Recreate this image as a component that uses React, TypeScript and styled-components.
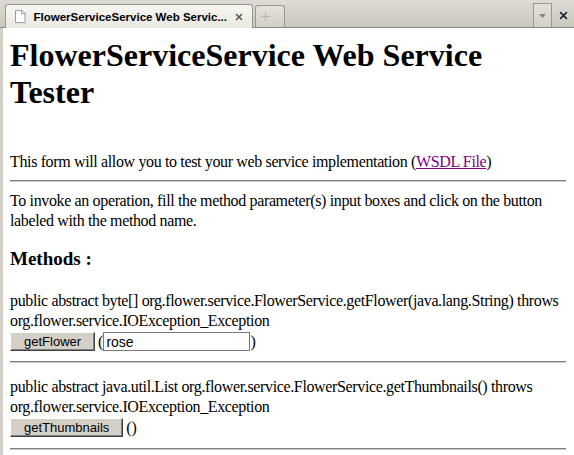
import React from 'react';
import styled, { createGlobalStyle } from 'styled-components';

const CHROME = '#d4d0c8';

const GlobalStyle = createGlobalStyle`
  html, body {
    margin: 0;
    padding: 0;
    background: #fff;
  }
  body {
    font-family: 'Liberation Serif', 'Times New Roman', serif;
    font-size: 16px;
    color: #000;
  }
`;

const TabBar = styled.div`
  height: 27px;
  display: flex;
  align-items: flex-end;
  background: linear-gradient(#dedbd4, #cbc7bf);
  border-bottom: 1px solid #8e8b86;
  padding-left: 5px;
`;

const Tab = styled.div<{ $active?: boolean }>`
  height: ${p => (p.$active ? 24 : 23)}px;
  width: ${p => (p.$active ? '248px' : '30px')};
  box-sizing: border-box;
  display: flex;
  align-items: center;
  gap: 8px;
  padding: 0 9px 0 ${p => (p.$active ? 9 : 0)}px;
  justify-content: ${p => (p.$active ? 'flex-start' : 'center')};
  margin-right: 2px;
  margin-bottom: -1px;
  border: 1px solid #9a978f;
  border-bottom: ${p => (p.$active ? 'none' : '1px solid #8e8b86')};
  border-radius: 3px 3px 0 0;
  background: ${p => (p.$active ? 'linear-gradient(#f6f5f2, #ece9e2)' : 'linear-gradient(#e4e1da, #d3cfc7)')};
  font-family: 'Liberation Sans', Tahoma, sans-serif;
  font-size: 11.5px;
  font-weight: bold;
  color: #000;
`;

const TabTitle = styled.span`
  white-space: nowrap;
`;

const TabClose = styled.span`
  margin-left: auto;
  display: grid;
  place-items: center;
`;

const TabTools = styled.div`
  margin-left: auto;
  display: flex;
  align-items: flex-end;
  height: 100%;
`;

const ToolButton = styled.div<{ $raised?: boolean }>`
  width: ${p => (p.$raised ? 19 : 22)}px;
  height: 24px;
  display: grid;
  place-items: center;
  box-sizing: border-box;
  border: ${p => (p.$raised ? '1px solid #9a978f' : 'none')};
  border-bottom: none;
  background: ${p => (p.$raised ? 'linear-gradient(#e4e1da, #d3cfc7)' : 'transparent')};
`;

const Page = styled.div`
  display: flex;
  min-height: 427px;
`;

const Strip = styled.div`
  width: 3px;
  background: ${CHROME};
  flex-shrink: 0;
`;

const Content = styled.div`
  flex: 1;
  padding: 0 8px 0 7px;
  line-height: 20px;
  letter-spacing: -0.36px;
`;

const Title = styled.h1`
  font-size: 32px;
  line-height: 37px;
  font-weight: bold;
  letter-spacing: 0;
  margin: 9px 0 41px;
`;

const Paragraph = styled.p`
  margin: 0;
`;

const Rule = styled.hr<{ $before?: number; $after?: number }>`
  margin: ${p => p.$before ?? 10}px 0 ${p => p.$after ?? 9}px;
  border: none;
  border-top: 1px solid #808080;
  border-bottom: 1px solid #c8c8c8;
`;

const SectionTitle = styled.h3`
  font-size: 19px;
  font-weight: bold;
  letter-spacing: 0;
  margin: 17px 0 21px;
  line-height: 22px;
`;

const Link = styled.a`
  color: #800080;
`;

const CallRow = styled.div`
  display: flex;
  align-items: center;
  height: 21px;
  letter-spacing: 0;
`;

const InvokeButton = styled.button`
  height: 19px;
  padding: 0 13px;
  margin-right: 3px;
  background: ${CHROME};
  border: 1px solid;
  border-color: #fff #404040 #404040 #fff;
  box-shadow: inset -1px -1px 0 #808080;
  font-family: 'Liberation Sans', Arial, sans-serif;
  font-size: 13px;
  line-height: 15px;
  color: #000;
`;

const Paren = styled.span`
  font-family: 'Liberation Serif', serif;
  font-size: 16px;
`;

const ArgInput = styled.input`
  width: 147px;
  height: 19px;
  box-sizing: border-box;
  border: 1px solid #7a7a7a;
  padding: 0 2px;
  margin: 0;
  font-family: 'Liberation Sans', Arial, sans-serif;
  font-size: 14px;
  outline: none;
`;

const PageIcon = () => (
  <svg width="12" height="15" viewBox="0 0 12 15">
    <path d="M0.5 0.5H8L11.5 4V14.5H0.5Z" fill="#fff" stroke="#8a8a8a" />
    <path d="M7.5 0.5V4.5H11.5" fill="none" stroke="#8a8a8a" />
  </svg>
);

const CloseIcon = ({ color = '#555', size = 8 }: { color?: string; size?: number }) => (
  <svg width={size} height={size} viewBox="0 0 8 8">
    <path d="M1 1L7 7M7 1L1 7" stroke={color} strokeWidth="1.5" />
  </svg>
);

export default function App() {
  return (
    <>
      <GlobalStyle />
      <TabBar>
        <Tab $active>
          <PageIcon />
          <TabTitle>FlowerServiceService Web Servic...</TabTitle>
          <TabClose>
            <CloseIcon />
          </TabClose>
        </Tab>
        <Tab>
          <svg width="9" height="9" viewBox="0 0 9 9">
            <path d="M4.5 0V9M0 4.5H9" stroke="#b8b5ae" strokeWidth="1" />
          </svg>
        </Tab>
        <TabTools>
          <ToolButton $raised>
            <svg width="7" height="4" viewBox="0 0 7 4">
              <path d="M0 0H7L3.5 4Z" fill="#8a8780" />
            </svg>
          </ToolButton>
          <ToolButton>
            <CloseIcon color="#1c2a3c" size={9} />
          </ToolButton>
        </TabTools>
      </TabBar>
      <Page>
        <Strip />
        <Content>
          <Title>FlowerServiceService Web Service Tester</Title>
          <Paragraph>
            This form will allow you to test your web service implementation (<Link href="#">WSDL File</Link>)
          </Paragraph>
          <Rule $before={8} $after={9} />
          <Paragraph>
            To invoke an operation, fill the method parameter(s) input boxes and click on the button labeled with the method name.
          </Paragraph>
          <SectionTitle>Methods :</SectionTitle>
          <div>
            <Paragraph>
              public abstract byte[] org.flower.service.FlowerService.getFlower(java.lang.String) throws
              org.flower.service.IOException_Exception
            </Paragraph>
            <CallRow>
              <InvokeButton>getFlower</InvokeButton>
              <Paren>(</Paren>
              <ArgInput defaultValue="rose" />
              <Paren>)</Paren>
            </CallRow>
          </div>
          <Rule $before={9} $after={14} />
          <div>
            <Paragraph>
              public abstract java.util.List org.flower.service.FlowerService.getThumbnails() throws
              org.flower.service.IOException_Exception
            </Paragraph>
            <CallRow>
              <InvokeButton>getThumbnails</InvokeButton>
              <Paren>()</Paren>
            </CallRow>
          </div>
          <Rule $before={10} />
        </Content>
      </Page>
    </>
  );
}
